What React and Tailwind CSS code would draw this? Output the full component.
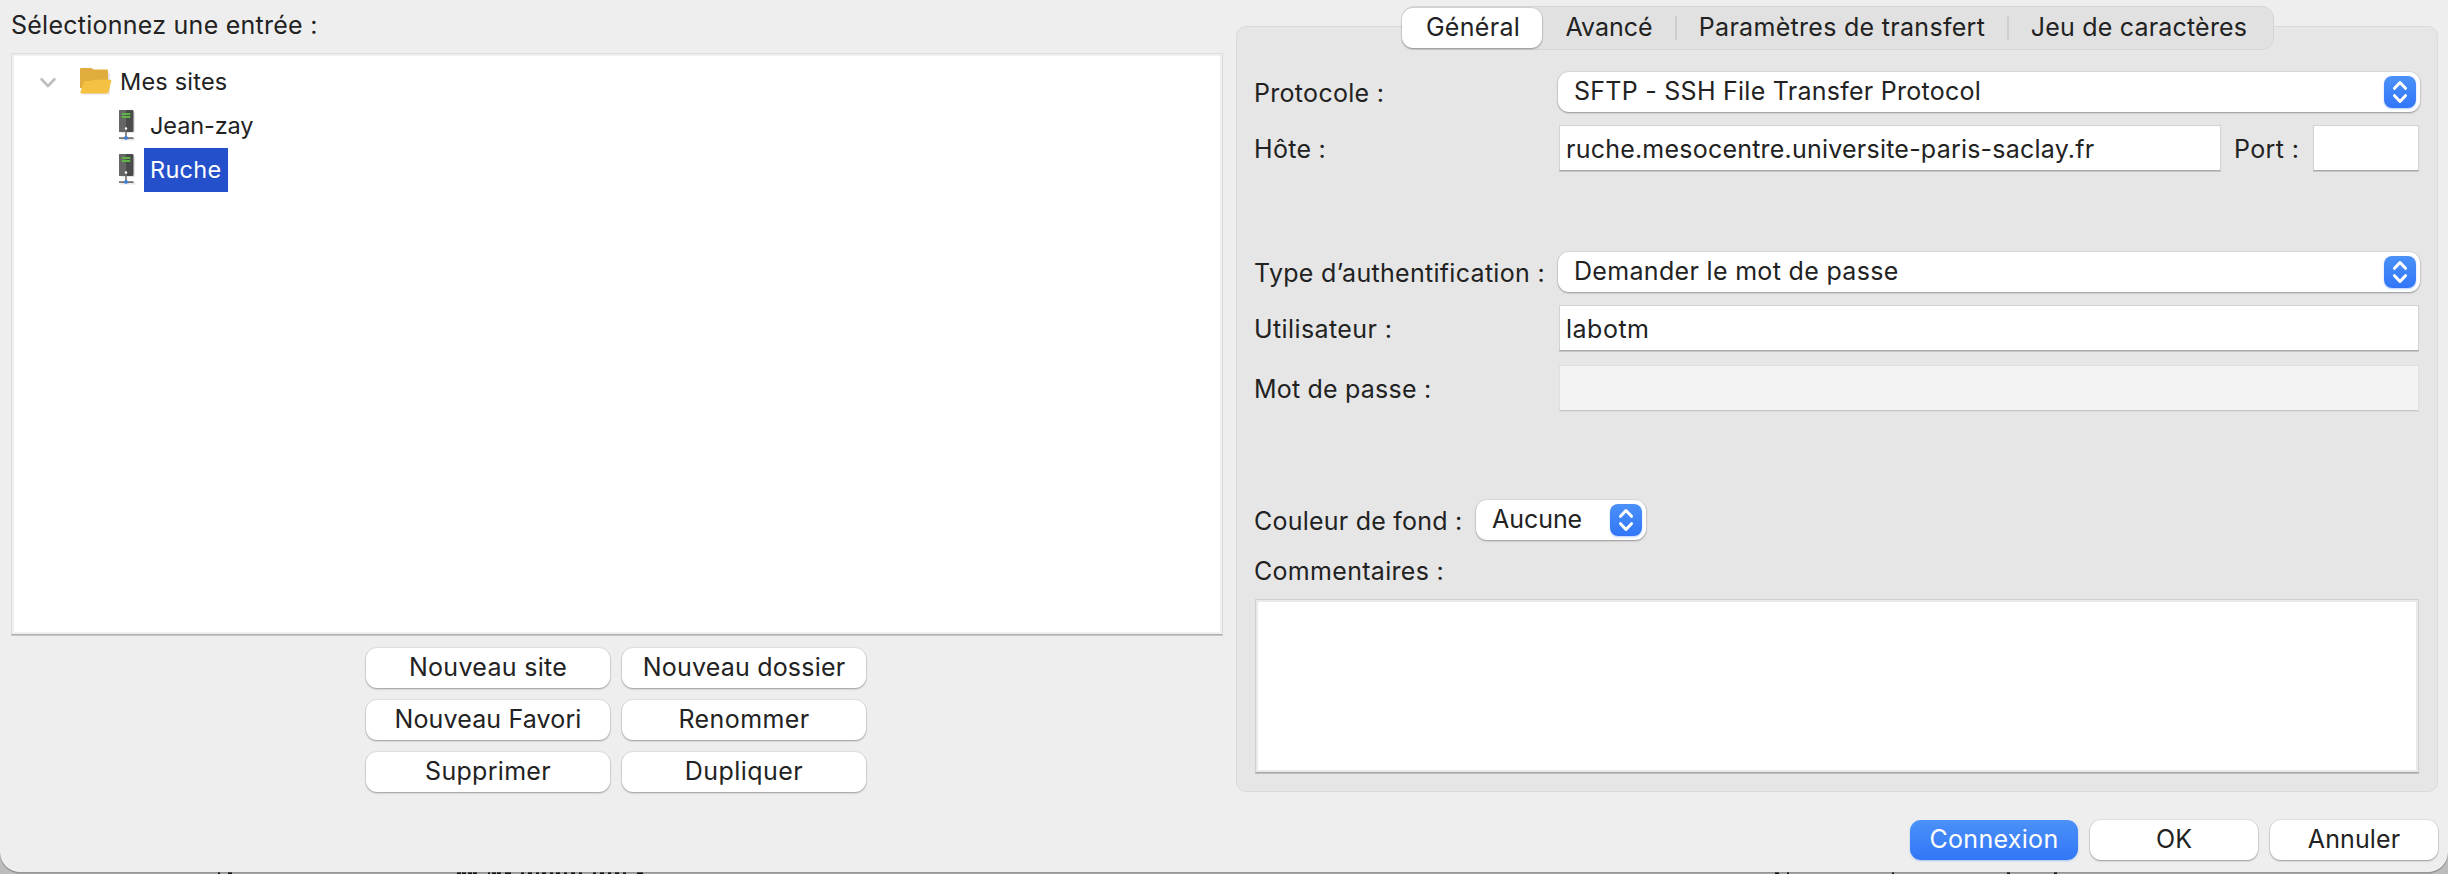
const buttonShadow =
  "shadow-[0_1px_2px_rgba(0,0,0,0.32),0_0_0_1px_rgba(0,0,0,0.05)]";

function Chevrons() {
  return (
    <span className="flex h-8 w-8 items-center justify-center rounded-[8px] bg-linear-to-b from-[#4b91f8] to-[#3276f7] shadow-[0_1px_2px_rgba(50,118,247,0.35)]">
      <svg width="32" height="32" viewBox="0 0 32 32" fill="none" stroke="#fff" strokeWidth="3" strokeLinecap="round" strokeLinejoin="round">
        <path d="M10.500 12.300 16 6.500l5.500 5.800M10.500 19.700l5.500 5.800 5.500-5.800" />
      </svg>
    </span>
  );
}

function Popup({ className, children }) {
  return (
    <div className={`flex h-10 items-start justify-between rounded-[11px] bg-white pl-4 pr-1 ${buttonShadow} ${className}`}>
      <span className="leading-[38px]">{children}</span>
      <span className="mt-1">
        <Chevrons />
      </span>
    </div>
  );
}

function Field({ className = "", disabled, children }) {
  const tone = disabled
    ? "border-[#dfdfdf] border-b-[#c8c8c8] bg-[#f3f3f3] shadow-[0_1px_0_#dadada]"
    : "border-[#d2d2d2] border-b-[#aaaaaa] bg-white shadow-[0_1px_0_#c6c6c6]";
  return (
    <div className={`h-[46px] border pl-[6px] leading-[46px] ${tone} ${className}`}>{children}</div>
  );
}

function Label({ className = "", children }) {
  return <div className={`shrink-0 ${className}`}>{children}</div>;
}

function PushButton({ className, children }) {
  return (
    <button className={`block h-10 rounded-[11px] bg-white pb-[2px] text-center leading-[38px] ${buttonShadow} ${className}`}>
      {children}
    </button>
  );
}

function FolderIcon() {
  return (
    <svg width="34" height="30" viewBox="0 0 34 30">
      <path d="M2 4.500q0-1.500 1.500-1.500h9l2.500 2h13q1.500 0 1.500 1.500V27H2z" transform="translate(1.500 1.500)" fill="#000" opacity=".1" />
      <path d="M1 3.300Q1 2 2.300 2h9.500q1 0 1.600.6l1 1h13.300q1.300 0 1.300 1.300V22H1z" fill="#dfac3d" />
      <path d="M4.600 16.200q.3-1.300 1.600-1.300h5.600l2.200-1.100h17.400q1.200 0 .9 1.200l-2.700 10.800q-.5 1.800-2.200 1.800H2.500Q1 27.600 1.400 26z" fill="#f5c142" />
    </svg>
  );
}

function ServerIcon() {
  return (
    <svg width="18" height="34" viewBox="0 0 18 34">
      <rect x="3" y="4" width="14" height="21" rx="1" fill="#000" opacity=".1" />
      <rect x="3" y="30.500" width="14" height="2" fill="#000" opacity=".1" />
      <rect x="1" y="2" width="14.500" height="22" rx="1.200" fill="#4b4b4b" />
      <path d="M2.200 2H8v22H2.200Q1 24 1 22.800V3.200Q1 2 2.200 2" fill="#666" />
      <rect x="3.700" y="5" width="8.600" height="2" fill="#5fb544" />
      <rect x="3.700" y="8" width="8.600" height="2" fill="#5fb544" />
      <rect x="7.200" y="21" width="1.600" height="8" fill="#6b6b6b" />
      <circle cx="8" cy="20.500" r="1.200" fill="#fff" />
      <rect x="1" y="29.200" width="14.500" height="1.800" fill="#757575" />
      <circle cx="8" cy="29.900" r="1.900" fill="#3f7fdc" />
    </svg>
  );
}

const siteActions = [
  ["Nouveau site", "tracking-[0.3px]"],
  ["Nouveau dossier", "tracking-[0.2px]"],
  ["Nouveau Favori", "tracking-[0.15px]"],
  ["Renommer", "tracking-[0.4px]"],
  ["Supprimer", "tracking-[0.3px]"],
  ["Dupliquer", "tracking-[0.45px]"],
];

// Tops of the glyphs showing below the window edge: [x, width]
const backdropMarks = [
  [218, 2], [228, 4], [457, 4], [462, 4], [468, 4], [473, 4], [488, 2], [492, 4], [497, 4], [505, 6],
  [521, 3], [528, 4], [536, 3], [542, 4], [550, 3], [556, 4], [564, 3], [571, 4], [579, 3], [593, 3],
  [600, 4], [608, 3], [615, 4], [623, 3], [637, 6], [1775, 4], [1787, 2], [1892, 2], [2007, 3], [2054, 3],
];

export default function App() {
  return (
    <div className="flex h-[874px] w-[2448px] flex-col overflow-hidden bg-[#bdbdbd] font-['Inter',sans-serif] text-[25px] tracking-[0.3px] whitespace-nowrap text-[#222222]">
      <div className="relative h-[872px] shrink-0 rounded-b-[20px] bg-[#eeeeee] shadow-[0_1px_1px_#7d7d7d]">
        <div className="flex">
          <section className="w-[1225px] shrink-0 pl-[11px]">
            <div className="h-[50px] leading-[50px] tracking-[0.25px]">Sélectionnez une entrée :</div>
            <div className="mt-[3px] h-[582px] w-[1212px] border border-[#dcdcdc] border-b-[#b0b0b0] bg-[#f0f0f0] p-[2px] shadow-[0_1px_0_#c8c8c8]">
              <div className="h-full bg-white pt-1 text-[23.5px] tracking-[0.2px]">
                <div className="flex h-11 items-center">
                  <svg className="ml-[24px]" width="20" height="14" viewBox="0 0 20 14" fill="none" stroke="#bfbfbf" strokeWidth="2.700" strokeLinecap="round" strokeLinejoin="round">
                    <path d="M3.500 4.200 10 11l6.500-6.800" />
                  </svg>
                  <span className="mb-[2px] ml-[21px]">
                    <FolderIcon />
                  </span>
                  <span className="ml-[7px] pb-px leading-[43px]">Mes sites</span>
                </div>
                <div className="flex h-11 items-center">
                  <span className="mb-[2px] ml-[104px]">
                    <ServerIcon />
                  </span>
                  <span className="ml-[14px] pb-px leading-[43px] tracking-[-0.1px]">Jean-zay</span>
                </div>
                <div className="flex h-11 items-center">
                  <span className="mb-[2px] ml-[104px]">
                    <ServerIcon />
                  </span>
                  <span className="ml-[8px] h-11 w-[84px] bg-[#2450cb] pl-[6px] leading-[43px] tracking-[0.3px] text-white">Ruche</span>
                </div>
              </div>
            </div>
            <div className="mt-[13px] ml-[355px] grid w-[500px] grid-cols-2 gap-3">
              {siteActions.map(([text, tracking]) => (
                <PushButton key={text} className={tracking}>
                  {text}
                </PushButton>
              ))}
            </div>
          </section>

          <section className="mt-[26px] ml-[11px] flex h-[766px] w-[1202px] shrink-0 flex-col rounded-[10px] border border-[#dadada] bg-[#e6e6e6] pl-[17px]">
            <nav className="-mt-[21px] ml-[148px] flex h-[44px] w-[872px] shrink-0 items-center rounded-[12px] border border-[#d6d6d6] bg-[#e1e1e1] text-center">
              <div className={`-ml-px h-10 w-[140px] rounded-[11px] bg-white pl-[2px] leading-[38px] ${buttonShadow}`}>Général</div>
              <div className="h-10 w-[133px] pl-px leading-[38px] tracking-normal">Avancé</div>
              <div className="h-6 w-0.5 bg-[#cdcdcd]" />
              <div className="h-10 w-[330px] leading-[38px] tracking-[0.3px]">Paramètres de transfert</div>
              <div className="h-6 w-0.5 bg-[#cdcdcd]" />
              <div className="h-10 w-[262px] pr-[2px] leading-[38px] tracking-[0.2px]">Jeu de caractères</div>
            </nav>

            <div className="mt-[22px] flex h-10">
              <Label className="w-[304px] leading-[42px]">Protocole :</Label>
              <Popup className="w-[862px] tracking-[0.26px]">SFTP - SSH File Transfer Protocol</Popup>
            </div>
            <div className="mt-[13px] flex h-[47px]">
              <Label className="w-[305px] leading-[48px]">Hôte :</Label>
              <Field className="w-[662px] tracking-[0.22px]">ruche.mesocentre.universite-paris-saclay.fr</Field>
              <Label className="w-[92px] pl-[13px] leading-[48px] tracking-[0.4px]">Port :</Label>
              <Field className="w-[106px]" />
            </div>

            <div className="mt-20 flex h-10">
              <Label className="w-[304px] leading-[42px]">Type d’authentification :</Label>
              <Popup className="w-[862px] tracking-[0.32px]">Demander le mot de passe</Popup>
            </div>
            <div className="mt-[13px] flex h-[47px]">
              <Label className="w-[305px] leading-[48px] tracking-[0.4px]">Utilisateur :</Label>
              <Field className="w-[860px] tracking-[0.5px]">labotm</Field>
            </div>
            <div className="mt-[13px] flex h-[47px]">
              <Label className="w-[305px] leading-[48px] tracking-[0.2px]">Mot de passe :</Label>
              <Field className="w-[860px]" disabled />
            </div>

            <div className="mt-[88px] flex h-10">
              <Label className="w-[222px] leading-[42px] tracking-[0.23px]">Couleur de fond :</Label>
              <Popup className="w-[170px] tracking-[-0.05px]">Aucune</Popup>
            </div>
            <div className="mt-[11px] h-10 leading-10">Commentaires :</div>
            <div className="mt-2 ml-px h-[174px] w-[1164px] shrink-0 border border-[#d0d0d0] border-b-[#a8a8a8] bg-[#eaeaea] p-[2px] shadow-[0_1px_0_#c0c0c0]">
              <div className="h-full bg-white" />
            </div>
          </section>
        </div>

        <footer className="mt-7 flex justify-end gap-3 pr-[10px]">
          <button className="block h-10 w-[168px] rounded-[11px] bg-linear-to-b from-[#4b91f8] to-[#3276f7] pb-[2px] leading-[38px] text-white shadow-[0_1px_2px_rgba(50,118,247,0.35)]">
            Connexion
          </button>
          <PushButton className="w-[168px] tracking-normal">OK</PushButton>
          <PushButton className="w-[168px] tracking-[0.1px]">Annuler</PushButton>
        </footer>
      </div>
      <svg className="relative block shrink-0" width="2448" height="2" viewBox="0 0 2448 2">
        <rect x="16" width="2416" height="2" fill="#a6a6a6" />
        <rect x="16" width="2416" height="1" fill="#959595" />
        {backdropMarks.map(([x, width]) => (
          <rect key={x} x={x} y="0.400" width={width} height="1.600" fill="#151515" />
        ))}
      </svg>
    </div>
  );
}
